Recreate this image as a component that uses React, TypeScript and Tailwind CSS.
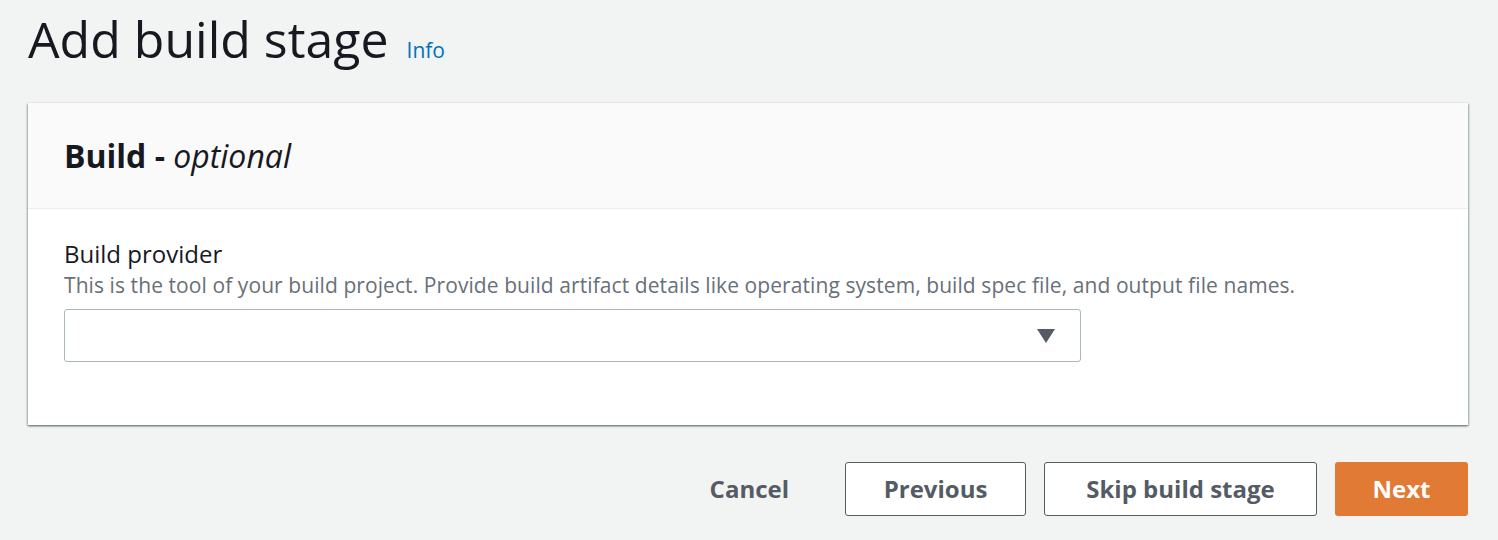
export default function App() {
    return (
        <div
            className="min-h-[540px] w-full bg-[#f2f3f3] pl-7 pr-[30px] pt-[7px] text-[#16191f]"
            style={{ fontFamily: '"Open Sans", "Noto Sans", sans-serif' }}
        >
            {/* Page header */}
            <div className="flex items-baseline gap-[18px] h-[64px]">
                <h1 className="text-[50px] leading-[64px] font-normal">Add build stage</h1>
                <a className="text-[21px] text-[#0073bb]">Info</a>
            </div>

            {/* Build card */}
            <div className="mt-[32px] bg-white shadow-[0_1px_2px_0_rgba(0,28,36,0.45),1px_1px_2px_0_rgba(0,28,36,0.2),-1px_1px_2px_0_rgba(0,28,36,0.2)]">
                <div className="h-[106px] flex items-center px-9 bg-[#fafafa] border-b border-[#eaeded]">
                    <h2 className="text-[32px] font-bold">
                        Build - <span className="italic font-normal">optional</span>
                    </h2>
                </div>
                <div className="px-9 pt-[30px] pb-[63px]">
                    <label className="block text-[24px] leading-[30px]">Build provider</label>
                    <p className="text-[21px] leading-[32px] text-[#687078] tracking-[0.08px]">
                        This is the tool of your build project. Provide build artifact details like operating system,
                        build spec file, and output file names.
                    </p>
                    <div className="mt-[8px] w-[1017px] h-[53px] border border-[#aab7b8] rounded-[3px] flex items-center justify-end pr-6">
                        <svg width="20" height="16" viewBox="0 0 20 16">
                            <path d="M1 1h18l-9 14z" fill="#545b64" />
                        </svg>
                    </div>
                </div>
            </div>

            {/* Actions */}
            <div className="mt-[37px] flex items-center justify-end gap-[18px]">
                <button className="px-5 h-[54px] text-[24px] font-bold text-[#545b64] mr-[18px]">Cancel</button>
                <button className="w-[181px] h-[54px] text-[24px] font-bold text-[#545b64] bg-white border border-[#545b64] rounded-[3px]">
                    Previous
                </button>
                <button className="w-[273px] h-[54px] text-[24px] font-bold text-[#545b64] bg-white border border-[#545b64] rounded-[3px]">
                    Skip build stage
                </button>
                <button className="w-[133px] h-[54px] text-[24px] font-bold text-white bg-[#e07a35] rounded-[3px]">
                    Next
                </button>
            </div>
        </div>
    );
}
